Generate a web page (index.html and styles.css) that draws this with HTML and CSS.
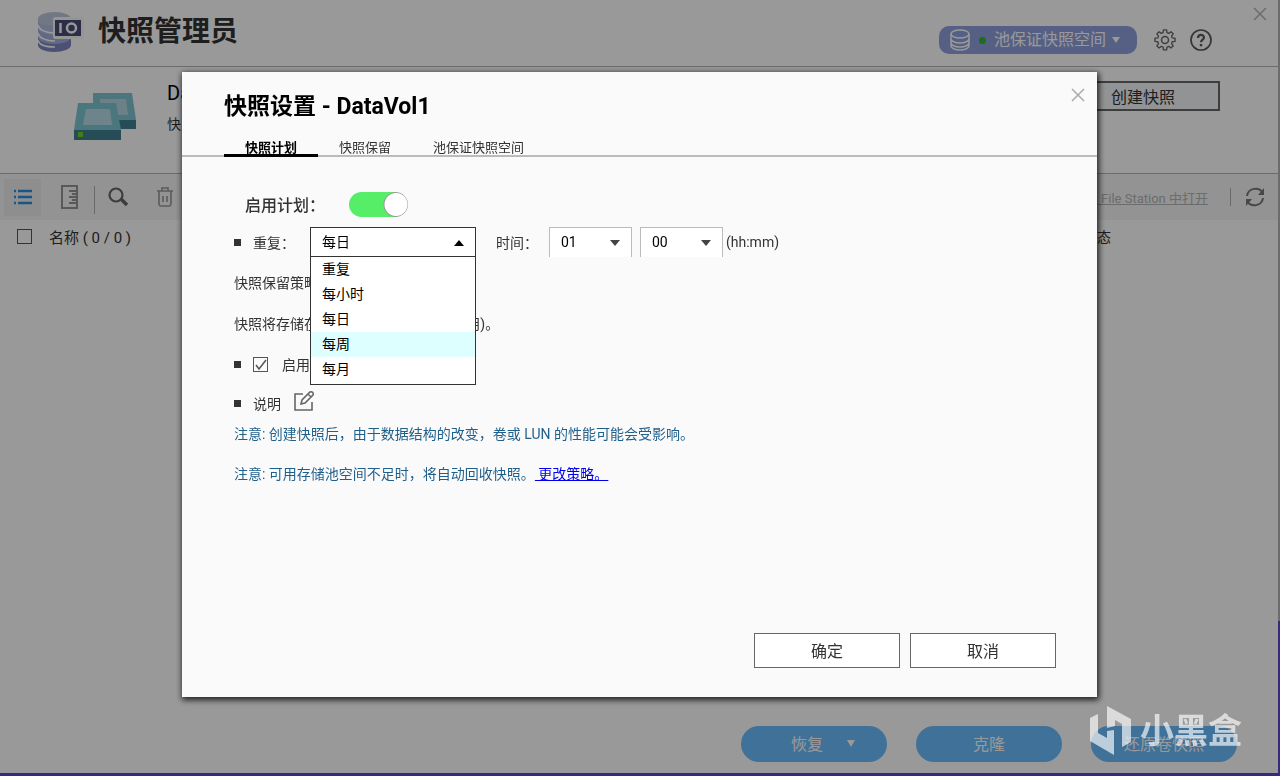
FILE: index.html
```html
<!DOCTYPE html>
<html lang="zh-CN">
<head>
    <meta charset="UTF-8">
    <meta name="viewport" content="width=device-width, initial-scale=1.0">
    <title>快照管理员</title>
    <link rel="stylesheet" href="styles.css">
</head>
<body>
    <div class="app">
        <header class="header">
            <svg class="logo" viewBox="0 0 50 44" width="50" height="44">
                <path d="M1 9v26c0 4 7 7 16 7s17-3 17-7V9z" fill="#7f86c4"/>
                <path d="M1 9v18c0 4 7 7 16 7s17-3 17-7V9z" fill="#a3b0dc"/>
                <path d="M1 9v8c0 4 7 8 16 8s17-4 17-8V9z" fill="#b4bfe0"/>
                <ellipse cx="17.500" cy="9" rx="16.500" ry="7" fill="#bcc8dc"/>
                <path d="M1 15c1 5 8 8 17 8M1 23c1 5 8 8 17 8M1 30c1 5 8 7 17 7" fill="none" stroke="#fff" stroke-width="1.500"/>
                <rect x="16" y="7" width="31" height="22" rx="2" fill="#f8f8f8"/>
                <rect x="18" y="10" width="26" height="16" fill="#4a4e78"/>
                <path d="M23.500 13v10" stroke="#fff" stroke-width="2.500"/>
                <circle cx="34.500" cy="18" r="4.500" fill="none" stroke="#fff" stroke-width="2.500"/>
            </svg>
            <h1 class="app-title">快照管理员</h1>
            <button class="pool-btn">
                <svg viewBox="0 0 22 24" width="22" height="24" fill="none" stroke="#fff" stroke-width="1.500">
                    <ellipse cx="11" cy="6" rx="9" ry="4"/>
                    <path d="M2 6v12c0 2 4 4 9 4s9-2 9-4V6M2 11c0 2 4 4 9 4s9-2 9-4M2 15c0 2 4 4 9 4s9-2 9-4"/>
                </svg>
                <span class="dot"></span>
                <span>池保证快照空间</span>
                <svg viewBox="0 0 8 6" width="8" height="6"><path d="M0 0h8L4 6z" fill="#fff"/></svg>
            </button>
            <button class="icon-btn" aria-label="设置">
                <svg viewBox="0 0 24 24" width="24" height="24" fill="none" stroke="#6a6a6a" stroke-width="1.500" stroke-linejoin="round">
                    <path d="M10.3 2h3.4l.4 3 2 .8 2.400-1.800 2.400 2.400-1.800 2.400.8 2 3 .4v3.400l-3 .4-.8 2 1.800 2.400-2.400 2.400-2.400-1.800-2 .8-.4 3h-3.400l-.4-3-2-.8-2.400 1.800-2.400-2.400 1.800-2.400-.8-2-3-.4v-3.400l3-.4.8-2-1.800-2.400 2.400-2.400 2.400 1.800 2-.8z" transform="translate(1 0) scale(.92)"/>
                    <circle cx="12" cy="12" r="3.500"/>
                </svg>
            </button>
            <button class="icon-btn" aria-label="帮助">
                <svg viewBox="0 0 24 24" width="24" height="24" fill="none" stroke="#5a5a5a" stroke-width="1.700">
                    <circle cx="12" cy="12" r="10"/>
                    <path d="M9 10c0-4 6-4 6-.5 0 2-3 2.200-3 4.800" stroke-width="2.200"/>
                    <path d="M12 16v2.300" stroke-width="2.400"/>
                </svg>
            </button>
            <button class="close app-close" aria-label="关闭">
                <svg viewBox="0 0 14 14" width="14" height="14"><path d="M1 1l12 12M13 1L1 13" stroke="currentColor" stroke-width="1.500"/></svg>
            </button>
        </header>

        <section class="volume">
            <svg class="volume-icon" viewBox="0 0 64 50" width="64" height="50">
                <path d="M20 2h39l4 27H20z" fill="#7fc4d2"/>
                <path d="M20 29h43v9H20z" fill="#3f7f92"/>
                <path d="M27 8h26l2 16H27z" fill="#b3d6e2"/>
                <path d="M5 12h38l5 27H1z" fill="#7cc6d0"/>
                <path d="M13 18h24l2 16H10z" fill="#b9dce6"/>
                <path d="M1 39h47v10H1z" fill="#3f7f92"/>
                <rect x="5" y="41" width="5" height="5" fill="#6fd024"/>
            </svg>
            <div class="volume-info">
                <p class="volume-name">DataVol1</p>
                <p class="volume-count">快照: 0</p>
            </div>
            <button class="create-btn">创建快照</button>
        </section>

        <div class="toolbar">
            <button class="tool active" aria-label="列表">
                <svg viewBox="0 0 20 16" width="20" height="16" stroke="#2c8fdd" stroke-width="2.500">
                    <path d="M1 2h2M1 8h2M1 14h2M5 2h14M5 8h14M5 14h14"/>
                </svg>
            </button>
            <button class="tool" aria-label="时间轴">
                <svg viewBox="0 0 18 24" width="18" height="24" fill="none" stroke="#949494" stroke-width="2">
                    <path d="M1 1h15v22H1zM8 6h8M11 9h5M8 12h8M11 15h5M8 18h8"/>
                </svg>
            </button>
            <span class="divider"></span>
            <button class="tool" aria-label="搜索">
                <svg viewBox="0 0 22 20" width="22" height="20" fill="none" stroke="#666">
                    <circle cx="9" cy="8" r="6.500" stroke-width="2.200"/>
                    <path d="M14 12l6 6" stroke-width="3.500"/>
                </svg>
            </button>
            <button class="tool" aria-label="删除">
                <svg viewBox="0 0 18 20" width="18" height="20" fill="none" stroke="#999" stroke-width="1.600">
                    <path d="M1 4h16M6 4V1h6v3M3 4v12c0 2 1 3 2 3h8c1 0 2-1 2-3V4M7 9v6M11 9v6"/>
                </svg>
            </button>
            <a href="#" class="open-link">在 File Station 中打开</a>
            <span class="divider divider-right"></span>
            <button class="refresh" aria-label="刷新">
                <svg viewBox="0 0 20 20" width="20" height="20" fill="none" stroke="#777" stroke-width="2">
                    <path d="M2 9c1-8 12-10 16-3M18 11c-1 8-12 10-16 3"/>
                    <path d="M19 1v7h-6zM1 19v-7h6z" fill="#777" stroke="none"/>
                </svg>
            </button>
        </div>

        <table class="list">
            <thead>
                <tr>
                    <th class="col-check"><input type="checkbox" class="check" aria-label="全选"></th>
                    <th>名称 ( 0 / 0 )</th>
                    <th class="col-status">状态</th>
                </tr>
            </thead>
        </table>

        <footer class="actions">
            <button class="action">恢复
                <svg class="action-arrow" viewBox="0 0 8 7" width="8" height="7"><path d="M0 0h8L4 7z" fill="#fff"/></svg>
            </button>
            <button class="action">克隆</button>
            <button class="action">还原卷快照</button>
        </footer>
    </div>

    <div class="overlay">
        <div class="modal" role="dialog" aria-labelledby="modal-title">
            <button class="close modal-close" aria-label="关闭">
                <svg viewBox="0 0 14 14" width="14" height="14"><path d="M1 1l12 12M13 1L1 13" stroke="currentColor" stroke-width="1.500"/></svg>
            </button>
            <h2 class="modal-title" id="modal-title">快照设置 - DataVol1</h2>
            <nav class="tabs">
                <a href="#" class="tab selected">快照计划</a>
                <a href="#" class="tab">快照保留</a>
                <a href="#" class="tab">池保证快照空间</a>
            </nav>

            <form class="settings">
                <div class="row enable-row">
                    <label for="enable">启用计划：</label>
                    <input type="checkbox" id="enable" class="switch" checked>
                </div>
                <div class="row repeat-row">
                    <span class="bullet"></span>
                    <label for="repeat" class="repeat-label">重复：</label>
                    <div class="dropdown">
                        <select id="repeat" class="repeat-select">
                            <option>重复</option>
                            <option>每小时</option>
                            <option selected>每日</option>
                            <option>每周</option>
                            <option>每月</option>
                        </select>
                        <svg class="arrow" viewBox="0 0 10 6" width="10" height="6"><path d="M0 6h10L5 0z" fill="#000"/></svg>
                        <ul class="options">
                            <li>重复</li>
                            <li>每小时</li>
                            <li>每日</li>
                            <li class="hover">每周</li>
                            <li>每月</li>
                        </ul>
                    </div>
                    <label for="hour" class="time-label">时间：</label>
                    <div class="dropdown">
                        <select id="hour" class="time-select"><option>01</option></select>
                        <svg class="arrow" viewBox="0 0 10 6" width="10" height="6"><path d="M0 0h10L5 6z" fill="#444"/></svg>
                    </div>
                    <div class="dropdown minute">
                        <select id="minute" class="time-select" aria-label="分钟"><option>00</option></select>
                        <svg class="arrow" viewBox="0 0 10 6" width="10" height="6"><path d="M0 0h10L5 6z" fill="#444"/></svg>
                    </div>
                    <span class="unit">(hh:mm)</span>
                </div>
                <p class="policy">快照保留策略: 智能</p>
                <p class="storage">快照将存储在该卷的存储池中 (全部可用)。</p>
                <div class="row smart-row">
                    <span class="bullet"></span>
                    <input type="checkbox" id="smart" class="check" checked>
                    <label for="smart">启用智能快照</label>
                </div>
                <div class="row desc-row">
                    <span class="bullet"></span>
                    <span>说明</span>
                    <button type="button" class="edit" aria-label="编辑说明">
                        <svg viewBox="0 0 22 22" width="22" height="22" fill="none" stroke="#666" stroke-width="1.600">
                            <path d="M10 4H2v16h17v-8"/>
                            <path d="M8 14l1-4 8-8c2-1 4 1 3 3l-8 8zM15 4l3 3"/>
                        </svg>
                    </button>
                </div>
                <p class="note">注意: 创建快照后，由于数据结构的改变，卷或 LUN 的性能可能会受影响。</p>
                <p class="note note-last">注意: 可用存储池空间不足时，将自动回收快照。<a href="#">&nbsp;更改策略。</a></p>
            </form>

            <div class="modal-footer">
                <button class="modal-btn">确定</button>
                <button class="modal-btn">取消</button>
            </div>
        </div>
    </div>

    <div class="watermark">
        <svg viewBox="0 0 42 50" width="42" height="50" fill="currentColor">
            <path d="M0 12l8-4v19l9 5v-7l7-1v25L0 35z"/>
            <path d="M17 0l24 13v23l-9 5V18l-7-4v6l-8 2z"/>
        </svg>
        <span>小黑盒</span>
    </div>
</body>
</html>
```

FILE: styles.css
```css
* {
    box-sizing: border-box;
}

body {
    margin: 0;
    font-family: Roboto, "Noto Sans CJK SC", sans-serif;
    font-size: 14px;
    color: #333;
    background: #fff;
}

button,
select {
    font-family: inherit;
    font-size: inherit;
    color: inherit;
    margin: 0;
    padding: 0;
}

button {
    border: 0;
    background: none;
    cursor: pointer;
}

svg {
    display: block;
    flex: none;
}

p,
h1,
h2 {
    margin: 0;
}

.app {
    min-height: 100vh;
    display: flex;
    flex-direction: column;
    border-right: 2px solid;
    border-bottom: 3px solid;
    border-image: linear-gradient(#b4b4b4 80%, #5c43d9 80%) 0 2 3 0;
}

/* header */
.header {
    position: relative;
    height: 67px;
    display: flex;
    align-items: center;
    padding: 13px 65px 0 37px;
    border-bottom: 1px solid #b4b4b4;
}

.logo {
    margin: -16px 11px 0 0;
}

.app-title {
    margin-top: -16px;
    font-size: 28px;
    line-height: 32px;
    font-weight: bold;
}

.pool-btn {
    display: flex;
    align-items: center;
    width: 198px;
    height: 28px;
    margin-left: auto;
    margin-right: 16px;
    padding-left: 10px;
    border-radius: 10px;
    background: #8ea0dc;
    color: #fff;
    font-size: 16px;
    line-height: 24px;
    white-space: nowrap;
}

.dot {
    width: 7px;
    height: 7px;
    margin: 2px 8px 0;
    border-radius: 50%;
    background: #35b535;
}

.pool-btn svg:last-child {
    margin-left: 6px;
}

.icon-btn {
    margin-right: 12px;
}

.icon-btn + .icon-btn {
    margin-right: 0;
}

.close {
    position: absolute;
    color: #aaa;
}

.app-close {
    top: 7px;
    right: 11px;
    color: #b4b4b4;
}

/* volume */
.volume {
    display: flex;
    align-items: flex-start;
    height: 107px;
    padding: 14px 58px 0 73px;
    border-bottom: 1px solid #b4b4b4;
}

.volume-icon {
    margin: 10px 30px 0 0;
}

.volume-name {
    font-size: 20px;
    line-height: 24px;
    color: #000;
}

.volume-count {
    margin-top: 9px;
    line-height: 20px;
}

.create-btn {
    width: 154px;
    height: 30px;
    margin-left: auto;
    border: 2px solid #666;
    background: #f2f5f7;
    font-size: 16px;
}

/* toolbar */
.toolbar {
    display: flex;
    align-items: center;
    height: 46px;
    padding: 0 13px 0 4px;
    background: #f5f5f5;
}

.tool {
    display: flex;
    align-items: center;
    justify-content: center;
    width: 37px;
    height: 37px;
    margin-right: 10px;
}

.tool.active {
    background: #ededed;
}

.divider {
    width: 1px;
    height: 28px;
    margin: 6px 4px 0 -4px;
    background: #b0b0b0;
}

.divider-right {
    height: 18px;
    margin: 0 14px 0 22px;
}

.open-link {
    margin-left: auto;
    font-size: 13px;
    color: #b4b4b4;
}

/* list */
.list {
    width: 100%;
    border-collapse: collapse;
}

.list th {
    height: 34px;
    padding: 0 0 2px;
    text-align: left;
    font-size: 15px;
    font-weight: normal;
}

.list .col-check {
    width: 49px;
    padding-left: 17px;
}

.list .col-status {
    width: 195px;
    font-size: 14px;
}

.check {
    display: block;
    appearance: none;
    width: 15px;
    height: 15px;
    margin: 0;
    border: 1px solid #555;
    background: transparent;
}

.check:checked {
    background: url("data:image/svg+xml,%3Csvg xmlns='http://www.w3.org/2000/svg' viewBox='0 0 13 13'%3E%3Cpath d='M2 7l3 4 7-9' fill='none' stroke='%23555' stroke-width='1.500'/%3E%3C/svg%3E");
}

/* bottom actions */
.actions {
    display: flex;
    justify-content: flex-end;
    gap: 29px;
    margin-top: auto;
    padding: 0 41px 11px;
}

.action {
    display: flex;
    align-items: center;
    justify-content: center;
    width: 146px;
    height: 36px;
    padding-bottom: 2px;
    border-radius: 18px;
    background: #6cbeff;
    color: #fff;
    font-size: 16px;
}

.action-arrow {
    margin-left: 24px;
    margin-right: -18px;
}

/* modal */
.overlay {
    position: fixed;
    inset: 0;
    display: flex;
    padding: 72px 183px 79px 182px;
    background: rgba(0, 0, 0, 0.4);
}

.modal {
    position: relative;
    flex: 1;
    display: flex;
    flex-direction: column;
    background: #fafafa;
    box-shadow: 1px 2px 6px 1px rgba(0, 0, 0, 0.8);
}

.modal-close {
    top: 16px;
    right: 12px;
}

.modal-title {
    padding: 19px 42px 0;
    font-size: 23px;
    line-height: 32px;
    font-weight: bold;
    color: #000;
}

.tabs {
    display: flex;
    margin-top: 18px;
    padding: 0 42px;
    border-bottom: 2px solid #bbb;
}

.tab {
    padding: 1px 21px 0;
    margin-bottom: -2px;
    border-bottom: 3px solid transparent;
    font-size: 13px;
    line-height: 12px;
    color: #333;
    text-decoration: none;
}

.tab.selected {
    border-bottom-color: #000;
    color: #000;
    font-weight: bold;
}

.settings {
    flex: 1;
    padding: 32px 52px 0;
}

.row {
    display: flex;
    align-items: center;
    height: 20px;
}

.bullet {
    width: 7px;
    height: 7px;
    margin-right: 12px;
    background: #333;
}

.settings .enable-row {
    height: 30px;
    padding-left: 11px;
    font-size: 16px;
    font-weight: 500;
}

.switch {
    appearance: none;
    width: 59px;
    height: 25px;
    margin: 0 0 0 24px;
    border-radius: 13px;
    background: radial-gradient(circle at 47px 50%, #fff 11px, #999 12px, #5e6 13px);
}

.settings .repeat-row {
    height: 30px;
    margin-top: 8px;
}

.repeat-label {
    width: 57px;
}

.dropdown {
    position: relative;
}

.dropdown select {
    display: block;
    appearance: none;
    height: 30px;
    padding-left: 11px;
    border: 1px solid #333;
    border-radius: 0;
    background: #fff;
    color: #000;
}

.dropdown .repeat-select {
    width: 166px;
}

.dropdown .time-select {
    width: 83px;
    padding-bottom: 1px;
    border-color: #bbb;
    border-bottom: 0;
}

.arrow {
    position: absolute;
    top: 13px;
    right: 12px;
}

.options {
    position: absolute;
    top: 30px;
    left: 0;
    right: 0;
    z-index: 1;
    margin: 0;
    padding: 0 0 2px;
    list-style: none;
    border: 1px solid #333;
    border-top: 0;
    background: #fff;
    color: #000;
}

.options li {
    padding-left: 11px;
    line-height: 25px;
}

.options .hover {
    background: #dff;
}

.time-label {
    width: 53px;
    margin-left: 20px;
}

.minute {
    margin-left: 8px;
}

.unit {
    margin-left: 3px;
}

.policy,
.storage,
.note {
    line-height: 20px;
}

.policy {
    margin-top: 16px;
}

.storage {
    margin-top: 21px;
}

.smart-row {
    margin-top: 20px;
}

.smart-row .check {
    margin-right: 14px;
}

.desc-row {
    margin-top: 19px;
}

.edit {
    margin: -4px 0 0 12px;
}

.note {
    margin-top: 11px;
    color: #1f5f8b;
}

.note-last {
    margin-top: 20px;
}

.note a {
    color: #00e;
}

.modal-footer {
    display: flex;
    justify-content: flex-end;
    gap: 10px;
    padding: 0 41px 29px;
}

.modal-btn {
    width: 146px;
    height: 35px;
    padding-bottom: 2px;
    border: 1px solid #666;
    background: #fff;
    font-size: 16px;
}

.watermark {
    position: fixed;
    right: 38px;
    bottom: 20px;
    display: flex;
    align-items: center;
    gap: 8px;
    color: rgba(255, 255, 255, 0.65);
    font-size: 34px;
    line-height: 50px;
    font-weight: bold;
}
```
